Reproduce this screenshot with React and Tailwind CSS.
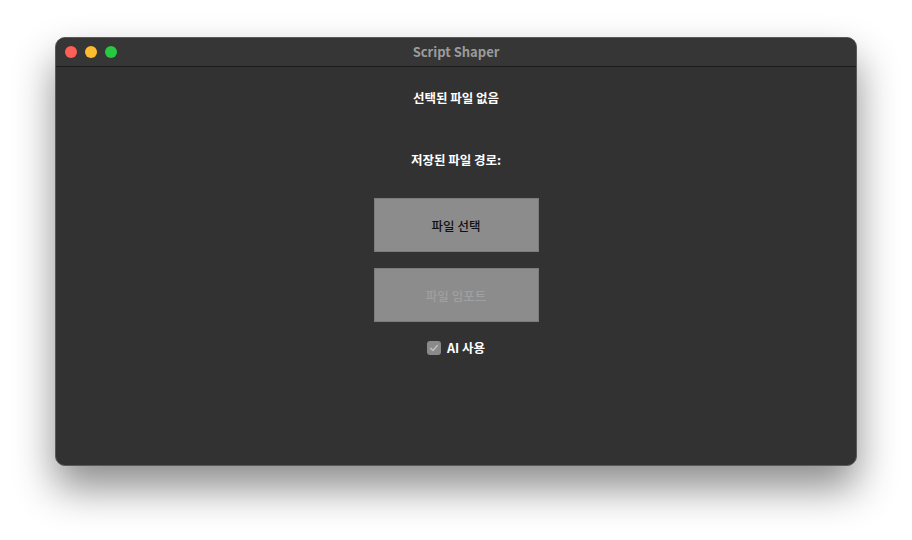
import React from "react";

const font = { fontFamily: '"Noto Sans CJK KR", "Liberation Sans", sans-serif' };

function TrafficLights() {
  return (
    <div className="flex items-center gap-2 pl-[9px]">
      <span className="w-3 h-3 rounded-full bg-[#fe5f57]" />
      <span className="w-3 h-3 rounded-full bg-[#febc2e]" />
      <span className="w-3 h-3 rounded-full bg-[#28c840]" />
    </div>
  );
}

export default function App() {
  return (
    <div className="w-[912px] h-[540px] bg-white overflow-hidden pt-[37px]" style={font}>
      {/* Window */}
      <div className="mx-auto w-[802px] h-[429px] rounded-[10px] bg-[#323232] border border-[#5a5a5a] shadow-[0_22px_40px_rgba(0,0,0,0.45)] overflow-hidden flex flex-col">
        {/* Title bar */}
        <div className="relative h-[29px] bg-[#363636] border-b border-[#1a1a1a] flex items-center shrink-0">
          <TrafficLights />
          <div className="absolute inset-0 flex items-center justify-center text-[13px] font-bold text-[#9b9b9b]">
            Script Shaper
          </div>
        </div>

        {/* Content */}
        <div className="flex flex-col items-center pt-[23px]">
          <p className="text-[12.5px] font-bold text-white leading-4">선택된 파일 없음</p>
          <p className="mt-[46px] text-[12.5px] font-bold text-white leading-4">저장된 파일 경로:</p>

          <button className="mt-[30px] w-[165px] h-[54px] pt-[3px] bg-[#8c8c8c] border border-[#7c7c7c] text-[12.5px] font-medium text-[#111]">
            파일 선택
          </button>
          <button
            disabled
            className="mt-[16px] w-[165px] h-[54px] pt-[3px] bg-[#8c8c8c] border border-[#7c7c7c] text-[12.5px] font-medium text-[#a0a0a0]"
          >
            파일 임포트
          </button>

          <label className="mt-[17px] flex items-center gap-[6px] text-[12.5px] font-bold text-white">
            <span className="w-[14px] h-[14px] rounded-[3px] bg-[#8a8a8a] flex items-center justify-center">
              <svg viewBox="0 0 12 12" className="w-[10px] h-[10px]">
                <path d="M2 6.5 L4.8 9 L10 3" fill="none" stroke="#bdbdbd" strokeWidth="1.8" strokeLinecap="round" strokeLinejoin="round" />
              </svg>
            </span>
            AI 사용
          </label>
        </div>
      </div>
    </div>
  );
}
